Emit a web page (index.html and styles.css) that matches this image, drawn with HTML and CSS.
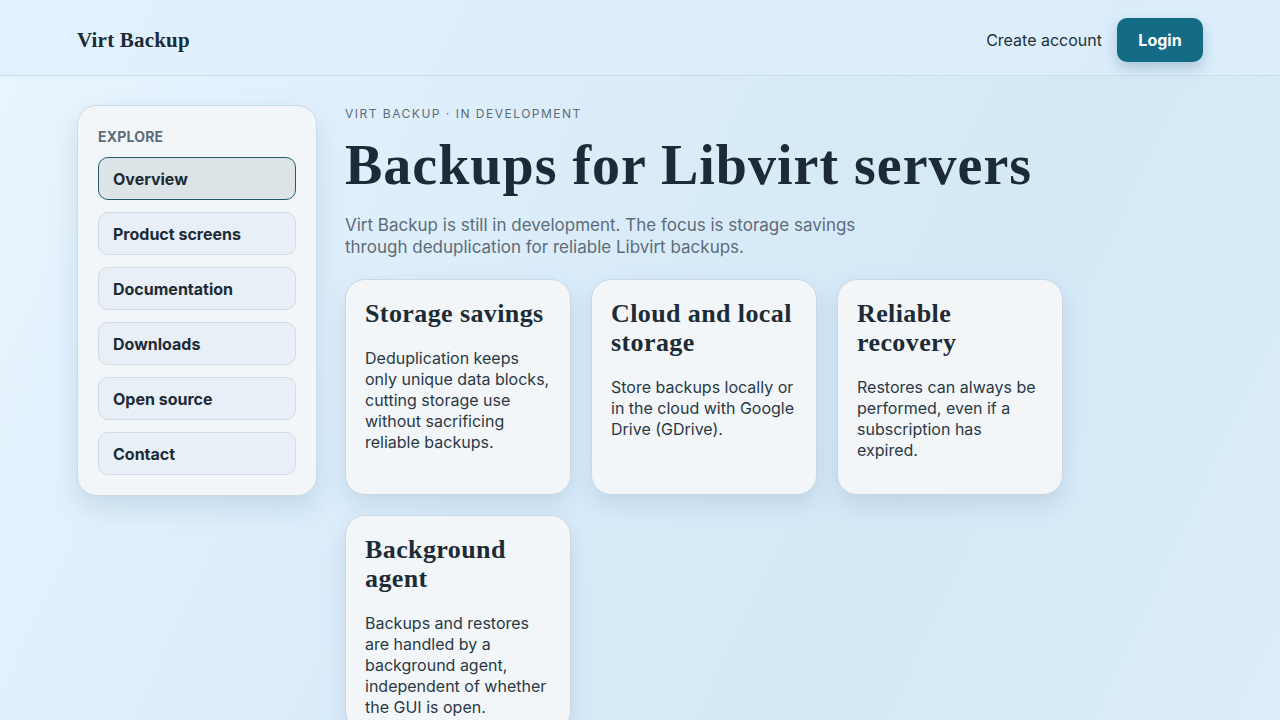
FILE: index.html
```html
<!DOCTYPE html>
<html lang="en">
<head>
    <meta charset="UTF-8">
    <title>Virt Backup</title>
    <link rel="stylesheet" href="styles.css">
</head>
<body>
    <header class="topbar">
        <div class="topbar-inner">
            <a class="brand" href="#">Virt Backup</a>
            <nav class="top-actions">
                <a class="create-link" href="#">Create account</a>
                <a class="login-button" href="#">Login</a>
            </nav>
        </div>
    </header>

    <div class="page">
        <aside class="sidebar">
            <p class="sidebar-title">EXPLORE</p>
            <a class="side-item active" href="#">Overview</a>
            <a class="side-item" href="#">Product screens</a>
            <a class="side-item" href="#">Documentation</a>
            <a class="side-item" href="#">Downloads</a>
            <a class="side-item" href="#">Open source</a>
            <a class="side-item" href="#">Contact</a>
        </aside>

        <main class="content">
            <p class="eyebrow">VIRT BACKUP · IN DEVELOPMENT</p>
            <h1 class="headline">Backups for Libvirt servers</h1>
            <p class="lead">Virt Backup is still in development. The focus is storage savings through deduplication for reliable Libvirt backups.</p>

            <div class="cards">
                <div class="card">
                    <h2>Storage savings</h2>
                    <p>Deduplication keeps only unique data blocks, cutting storage use without sacrificing reliable backups.</p>
                </div>
                <div class="card">
                    <h2>Cloud and local storage</h2>
                    <p>Store backups locally or in the cloud with Google Drive (GDrive).</p>
                </div>
                <div class="card">
                    <h2>Reliable recovery</h2>
                    <p>Restores can always be performed, even if a subscription has expired.</p>
                </div>
                <div class="card">
                    <h2>Background agent</h2>
                    <p>Backups and restores are handled by a background agent, independent of whether the GUI is open.</p>
                </div>
            </div>
        </main>
    </div>
</body>
</html>
```

FILE: styles.css
```css
body {
    margin: 0;
    min-height: 100vh;
    font-family: Inter, "Noto Sans", sans-serif;
    color: #1c2b36;
    background: linear-gradient(115deg, #e9f5fe 0%, #dcedfb 35%, #d4e8f6 70%, #dcedfb 100%);
}

a {
    text-decoration: none;
    color: inherit;
}

.topbar {
    height: 75px;
    border-bottom: 1px solid #cbdde9;
    background: rgba(222, 239, 252, 0.7);
}

.topbar-inner {
    box-sizing: border-box;
    max-width: 1126px;
    height: 100%;
    margin: 0 auto;
    padding-top: 5px;
    display: flex;
    align-items: center;
    justify-content: space-between;
}

.brand {
    font-family: "Liberation Serif", serif;
    font-weight: bold;
    font-size: 21px;
    letter-spacing: 0.2px;
    color: #1c2b36;
}

.top-actions {
    display: flex;
    align-items: center;
    gap: 15px;
}

.create-link {
    font-size: 16px;
    color: #22313c;
}

.login-button {
    width: 86px;
    height: 44px;
    display: flex;
    align-items: center;
    justify-content: center;
    border-radius: 10px;
    background: #136b86;
    color: #ffffff;
    font-weight: bold;
    font-size: 16px;
    box-shadow: 0 6px 14px rgba(19, 80, 110, 0.25);
}

.page {
    max-width: 1126px;
    margin: 0 auto;
    padding-top: 29px;
    display: flex;
    align-items: flex-start;
    gap: 28px;
}

.sidebar {
    width: 198px;
    padding: 20px;
    background: #f2f6f9;
    border: 1px solid #cddbe5;
    border-radius: 20px;
    box-shadow: 0 12px 26px rgba(90, 130, 160, 0.2);
    display: flex;
    flex-direction: column;
    gap: 12px;
}

.sidebar-title {
    margin: 2px 0 0;
    font-size: 14px;
    font-weight: bold;
    color: #5e6d79;
    letter-spacing: 0.2px;
}

.side-item {
    height: 41px;
    display: flex;
    align-items: center;
    padding-left: 14px;
    border: 1px solid #cfdbe5;
    border-radius: 10px;
    background: #e8eff6;
    font-size: 16px;
    font-weight: bold;
    color: #1c2b36;
}

.side-item.active {
    background: #dde4e8;
    border-color: #235c70;
}

.content {
    flex: 1;
}

.eyebrow {
    margin: 0;
    font-size: 12px;
    letter-spacing: 1.5px;
    color: #5d6c78;
    line-height: 18px;
}

.headline {
    margin: 10px 0 17px;
    font-family: "Liberation Serif", serif;
    font-weight: bold;
    font-size: 56px;
    line-height: 64px;
    letter-spacing: 1px;
    color: #1c2b36;
}

.lead {
    margin: 0;
    max-width: 540px;
    font-size: 17px;
    line-height: 22px;
    color: #5d6c78;
}

.cards {
    margin-top: 21px;
    display: grid;
    grid-template-columns: repeat(3, 226px);
    gap: 20px;
}

.card {
    height: 175px;
    padding: 19px 19px 20px;
    background: #f2f6f9;
    border: 1px solid #cbd8e2;
    border-radius: 20px;
    box-shadow: 0 10px 22px rgba(90, 130, 160, 0.18);
}

.card h2 {
    margin: 0 0 20px;
    font-family: "Liberation Serif", serif;
    font-weight: bold;
    font-size: 26px;
    line-height: 29px;
    letter-spacing: 0.4px;
    color: #1c2b36;
}

.card p {
    margin: 0;
    font-size: 16px;
    line-height: 21px;
    color: #2a3945;
}
```
